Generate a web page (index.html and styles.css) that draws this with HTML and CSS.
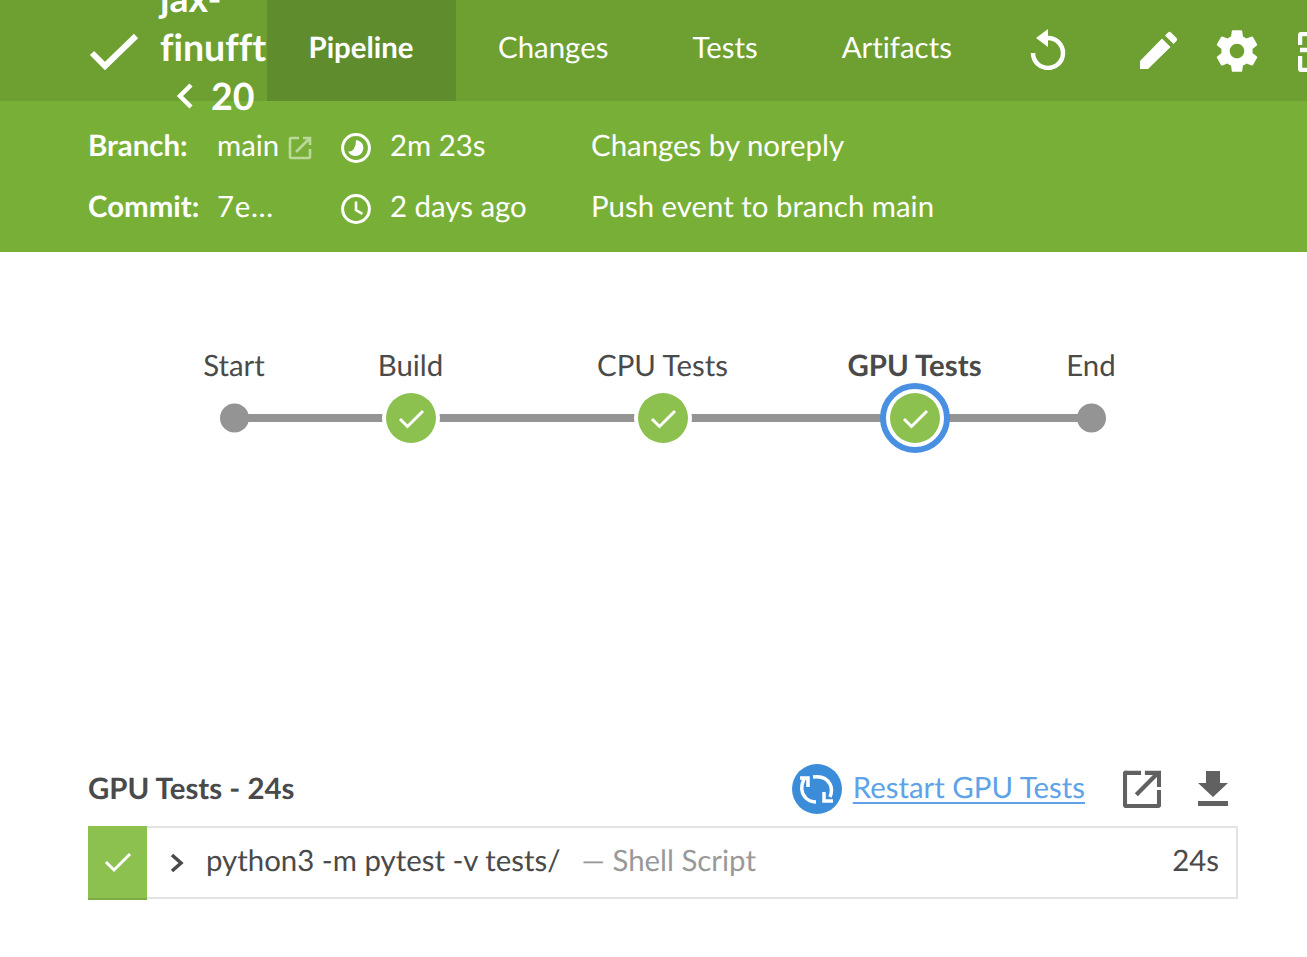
FILE: index.html
```html
<!DOCTYPE html>
<html lang="en">
<head>
<meta charset="utf-8">
<title>jax-finufft 20</title>
<link rel="stylesheet" href="styles.css">
</head>
<body>
<header class="top">
  <svg class="run-check" viewBox="0 0 50 38"><path d="M3 20 L16 33 L47 3" /></svg>
  <div class="title">
    <div class="title-line">jax-</div>
    <div class="title-line">finufft</div>
    <div class="title-line num"><svg class="chev" viewBox="0 0 18 28"><path d="M15 3 L4 14 L15 25"/></svg><span>20</span></div>
  </div>
  <nav class="tabs">
    <a class="tab active">Pipeline</a>
    <a class="tab">Changes</a>
    <a class="tab">Tests</a>
    <a class="tab">Artifacts</a>
  </nav>
  <div class="actions">
    <svg class="act act-replay" viewBox="0 0 36 42"><path class="fill" d="M18 1 L6 10 L18 19 Z"/><path class="line" d="M18 10 A15 15 0 1 1 3 25"/></svg>
    <svg class="act act-pen" viewBox="0 0 40 40"><path class="fill" d="M1 31 L23 8.500 L31.500 17 L9 39 L1 39 Z M26 5.500 L29 2.500 Q30.500 1 32 2.500 L37.500 8 Q39 9.500 37.500 11 L34.500 14 Z"/></svg>
    <svg class="act act-gear" viewBox="0 0 24 24"><path class="fill" fill-rule="evenodd" d="M19.430 12.980c.04-.32.07-.64.07-.98s-.03-.66-.07-.98l2.110-1.650c.19-.15.24-.42.120-.64l-2-3.460c-.12-.22-.39-.3-.61-.22l-2.490 1c-.52-.4-1.080-.73-1.690-.98l-.38-2.650C14.460 2.180 14.250 2 14 2h-4c-.25 0-.46.18-.49.42l-.38 2.650c-.61.25-1.170.59-1.690.98l-2.490-1c-.23-.09-.49 0-.61.22l-2 3.460c-.13.22-.07.49.12.64l2.110 1.650c-.04.32-.07.65-.07.98s.03.66.07.98l-2.110 1.650c-.19.15-.24.42-.12.64l2 3.460c.12.22.39.3.61.22l2.490-1c.52.4 1.080.73 1.690.98l.38 2.650c.03.24.24.42.49.42h4c.25 0 .46-.18.49-.42l.38-2.650c.61-.25 1.170-.59 1.690-.98l2.490 1c.23.09.49 0 .61-.22l2-3.460c.12-.22.07-.49-.12-.64l-2.110-1.650zM12 15.500c-1.930 0-3.500-1.570-3.500-3.500s1.570-3.500 3.500-3.500 3.500 1.570 3.500 3.500-1.570 3.500-3.500 3.500z"/></svg>
    <svg class="act act-exit" viewBox="0 0 40 40"><path class="line" d="M2 13 V4 Q2 2 4 2 H40 M2 18 H40 M2 24 V36 Q2 38 4 38 H40"/></svg>
  </div>
</header>

<section class="meta">
  <div class="meta-col col-branch">
    <div class="meta-row"><b class="meta-label">Branch:</b><span>main</span><svg class="ext-small" viewBox="0 0 24 24"><path d="M11 2 H3 Q2 2 2 3 V21 Q2 22 3 22 H21 Q22 22 22 21 V13 M8 16 L22 2 M15 2 H22 V9"/></svg></div>
    <div class="meta-row"><b class="meta-label">Commit:</b><span class="hash">7e…</span></div>
  </div>
  <div class="meta-col col-time">
    <div class="meta-row"><svg class="clock" viewBox="0 0 28 28"><circle cx="14" cy="14" r="12.500"/><path class="pie" d="M14 6.500 A7.500 7.500 0 1 1 6.500 17 Q10 18 12 15 Q14 12 14 6.500 Z"/></svg><span>2m 23s</span></div>
    <div class="meta-row"><svg class="clock" viewBox="0 0 28 28"><circle cx="14" cy="14" r="12.500"/><path d="M14 7 V15 L20 18.500"/></svg><span>2 days ago</span></div>
  </div>
  <div class="meta-col">
    <div class="meta-row">Changes by noreply</div>
    <div class="meta-row">Push event to branch main</div>
  </div>
</section>

<main class="content">
  <svg class="graph" width="1307" height="215" viewBox="0 0 1307 215">
    <g class="lbls">
      <text x="234" y="124">Start</text>
      <text x="410.500" y="124">Build</text>
      <text x="662.500" y="124">CPU Tests</text>
      <text class="sel" x="914.500" y="124">GPU Tests</text>
      <text x="1091" y="124">End</text>
    </g>
    <path class="conn" d="M234 166 H1091"/>
    <circle class="gap" cx="411" cy="166" r="29"/>
    <circle class="gap" cx="663" cy="166" r="29"/>
    <circle class="dot" cx="234.500" cy="166" r="14.500"/>
    <circle class="dot" cx="1091.500" cy="166" r="14.500"/>
    <circle class="node" cx="411" cy="166" r="25"/>
    <path class="tick" d="M400 167 L407.500 174.500 L423 159"/>
    <circle class="node" cx="663" cy="166" r="25"/>
    <path class="tick" d="M652 167 L659.500 174.500 L675 159"/>
    <circle class="ring" cx="915" cy="166" r="32"/>
    <circle class="node" cx="915" cy="166" r="25"/>
    <path class="tick" d="M904 167 L911.500 174.500 L927 159"/>
  </svg>

  <div class="step-head">
    <h2 class="step-title">GPU Tests - 24s</h2>
    <div class="step-tools">
      <span class="restart-badge"><svg viewBox="0 0 50 50"><path d="M8 14 H16 V23 M12 15 Q7 26 13 33 Q17 38 24 38 M21 13 Q33 11 38 20 Q41 26 38 33 M32 28 V37 H41"/></svg></span>
      <a class="restart-link">Restart GPU Tests</a>
      <svg class="tool tool-ext" viewBox="0 0 40 40"><path d="M19 3 H4 Q2 2 2 4 V36 Q2 38 4 38 H36 Q38 38 38 36 V21 M14 26 L37 3 M23 3 H38 V18"/></svg>
      <svg class="tool tool-dl" viewBox="0 0 30 36"><path d="M8 0 H22 V12 H30 L15 26 L0 12 H8 Z M0 30 H30 V35 H0 Z"/></svg>
    </div>
  </div>

  <div class="step-row">
    <div class="step-status"><svg viewBox="0 0 28 22"><path d="M2 11 L10 19 L26 3"/></svg></div>
    <svg class="step-chev" viewBox="0 0 14 20"><path d="M2 2 L11 10 L2 18"/></svg>
    <span class="step-cmd">python3 -m pytest -v tests/</span>
    <span class="step-type">— Shell Script</span>
    <span class="step-time">24s</span>
  </div>
</main>
</body>
</html>
```

FILE: styles.css
```css
* { box-sizing: border-box; }
html, body { margin: 0; padding: 0; height: 100%; overflow: hidden; }
body { background: #fff; color: #4a4a4a; font-family: Lato, "Open Sans", sans-serif; font-size: 29.400px; width: 1307px; text-rendering: geometricPrecision; font-variant-ligatures: none; }

.top { height: 101px; background: #6d9f31; color: #fff; display: flex; align-items: center; padding-left: 89px; width: 1340px; }
.run-check { width: 50px; height: 38px; flex: none; margin-right: 21px; margin-top: 3px; }
.run-check path { fill: none; stroke: #fff; stroke-width: 6; }
.title { width: 107px; flex: none; font-size: 37.500px; font-weight: 700; line-height: 49px; margin-top: -8px; }
.title-line { white-space: nowrap; }
.num { display: flex; align-items: center; padding-left: 16px; gap: 17px; }
.chev { width: 18px; height: 28px; }
.chev path { fill: none; stroke: #fff; stroke-width: 4.500; }
.tabs { display: flex; height: 101px; flex: none; }
.tab { display: flex; align-items: center; padding: 0 42px 6px; height: 101px; font-size: 29.400px; }
.tab.active { background: #5f8c2d; font-weight: 700; padding-left: 41.500px; padding-right: 42.500px; }
.actions { display: flex; align-items: center; flex: none; margin-left: 36px; margin-top: -4px; }
.act { display: block; flex: none; }
.fill { fill: #fff; }
.line { fill: none; stroke: #fff; stroke-width: 4.500; }
.act-replay { width: 36px; height: 42px; margin-right: 73px; }
.act-pen { width: 40px; height: 40px; margin-right: 33px; margin-top: 2px; }
.act-gear { width: 50px; height: 50px; margin-right: 36px; margin-top: 4px; }
.act-exit { width: 40px; height: 40px; margin-top: 6px; }

.meta { height: 151px; background: #78b037; color: #fff; display: flex; padding: 14px 0 0 88px; }
.meta-col { display: flex; flex-direction: column; }
.meta-row { height: 61px; display: flex; align-items: center; white-space: nowrap; }
.col-branch { width: 253px; }
.col-time { width: 250px; }
.meta-label { width: 129px; flex: none; }
.hash { font-kerning: none; letter-spacing: .7px; }
.ext-small { width: 24px; height: 24px; margin-left: 9px; margin-top: 5px; }
.ext-small path { fill: none; stroke: rgba(255,255,255,.5); stroke-width: 2.600; }
.clock { width: 30px; height: 30px; margin-right: 19px; margin-top: 5px; flex: none; }
.clock circle { fill: none; stroke: #fff; stroke-width: 2.800; }
.clock path { fill: none; stroke: #fff; stroke-width: 2.400; }
.clock path.pie { fill: #fff; stroke: none; }

.graph { display: block; }
.lbls text { text-anchor: middle; font-size: 29.400px; fill: #4a4a4a; }
.lbls text.sel { font-weight: 700; }
.conn { stroke: #949494; stroke-width: 8; fill: none; }
.gap { fill: #fff; }
.dot { fill: #949494; }
.node { fill: #8cc04f; }
.tick { fill: none; stroke: #fff; stroke-width: 3; }
.ring { fill: #fff; stroke: #4a90e2; stroke-width: 6; }

.step-head { display: flex; justify-content: space-between; align-items: center; height: 52px; margin: 296px 79px 11px 88px; }
.step-title { margin: -2px 0 0; font-size: 29.400px; font-weight: 700; }
.step-tools { display: flex; align-items: center; }
.restart-badge { width: 50px; height: 50px; border-radius: 50%; background: #3c8dd9; display: block; margin-right: 11px; }
.restart-badge svg { display: block; width: 50px; height: 50px; }
.restart-badge path { fill: none; stroke: #fff; stroke-width: 3.500; }
.restart-link { color: #5ea2e8; text-decoration: underline; text-underline-offset: 4px; text-decoration-thickness: 1.500px; margin-top: -3px; }
.tool { display: block; flex: none; }
.tool-ext { width: 38px; height: 38px; margin-left: 38px; margin-right: 37px; }
.tool-ext path { fill: none; stroke: #616161; stroke-width: 4.500; }
.tool-dl { width: 30px; height: 36px; }
.tool-dl path { fill: #616161; }

.step-row { display: flex; align-items: center; height: 73px; margin: 0 69px 0 88px; border: 2px solid #e3e3e3; border-left: none; }
.step-status { width: 59px; height: 74px; margin: -2px 0 -3px; background: #8cc04f; border-bottom: 2px solid #7dae45; display: flex; align-items: center; justify-content: center; flex: none; }
.step-status svg { width: 28px; height: 22px; }
.step-status path { fill: none; stroke: #fff; stroke-width: 3; }
.step-chev { width: 14px; height: 20px; margin: 0 22px 0 23px; flex: none; }
.step-chev path { fill: none; stroke: #4a4a4a; stroke-width: 3.500; }
.step-cmd { white-space: nowrap; margin-top: -4px; }
.step-type { color: #999; margin-left: 21px; margin-top: -4px; white-space: nowrap; }
.step-time { margin-left: auto; padding-right: 17px; margin-top: -4px; }
```
